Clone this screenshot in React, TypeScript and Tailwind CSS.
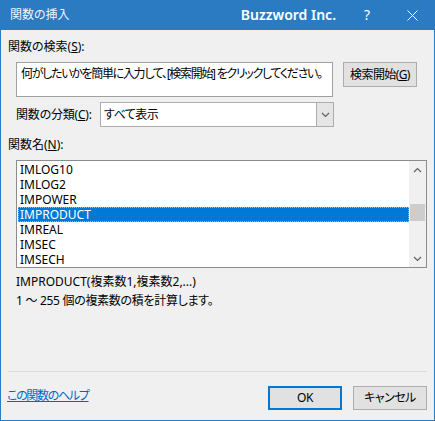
import React from "react";

const FONT = "[font-family:'Noto_Sans','Noto_Sans_CJK_JP',sans-serif] [font-feature-settings:'palt']";

const functionNames = ["IMLOG10", "IMLOG2", "IMPOWER", "IMPRODUCT", "IMREAL", "IMSEC", "IMSECH"];
const selectedName = "IMPRODUCT";

function Chevron({ up = false, className = "" }: { up?: boolean; className?: string }) {
  return (
    <svg width="9" height="6" viewBox="0 0 9 6" className={className}>
      <path
        d={up ? "M1 5 L4.5 1.5 L8 5" : "M1 1 L4.5 4.5 L8 1"}
        fill="none"
        stroke="#606060"
        strokeWidth="1.2"
      />
    </svg>
  );
}

function Button({ label, primary = false }: { label: React.ReactNode; primary?: boolean }) {
  return (
    <button
      type="button"
      className={`h-[24px] w-[74px] flex items-center justify-center bg-[#e1e1e1] text-[12px] text-black tracking-[-0.5px] ${
        primary ? "border-2 border-[#0078d7]" : "border border-[#adadad]"
      }`}
    >
      {label}
    </button>
  );
}

export default function App() {
  return (
    <div className={`${FONT} w-[435px] h-[421px] bg-[#2b7bc2] flex flex-col`}>
      {/* title bar */}
      <div className="h-[30px] flex items-center text-white">
        <span className="pl-[10px] text-[12px] text-white/95">関数の挿入</span>
        <div className="flex-1" />
        <span className="text-[14px] font-semibold leading-none">Buzzword Inc.</span>
        <span className="ml-[8px] w-[46px] text-center text-[14px] leading-none">?</span>
        <span className="w-[45px] flex justify-center">
          <svg width="11" height="11" viewBox="0 0 11 11">
            <path d="M0.5 0.5 L10.5 10.5 M10.5 0.5 L0.5 10.5" stroke="white" strokeWidth="1" />
          </svg>
        </span>
      </div>

      {/* body */}
      <div className="flex-1 mx-px mb-px bg-[#f0f0f0] flex flex-col text-[12px] text-black">
        <div className="mt-[9px] ml-[7px] h-[16px] leading-[16px]">
          関数の検索(<span className="underline">S</span>):
        </div>

        <div className="mt-[7px] ml-[15px] flex items-start gap-[10px]">
          <div className="w-[317px] h-[35px] bg-white border border-[#a0a0a0] pl-[4px] pt-[3px] leading-[16px] whitespace-nowrap overflow-hidden tracking-[-1.3px]">
            何がしたいかを簡単に入力して、[検索開始] をクリックしてください。
          </div>
          <button
            type="button"
            className="w-[74px] h-[25px] bg-[#e1e1e1] border border-[#adadad] flex items-center justify-center tracking-[-0.6px]"
          >
            検索開始(<span className="underline">G</span>)
          </button>
        </div>

        <div className="mt-[5px] ml-[15px] flex items-center h-[25px]">
          <div className="w-[84px] leading-[16px] tracking-[-0.2px]">
            関数の分類(<span className="underline">C</span>):
          </div>
          <div className="w-[234px] h-[25px] bg-white border border-[#acacac] flex">
            <div className="flex-1 pl-[3px] flex items-center tracking-[-0.5px]">すべて表示</div>
            <div className="w-[17px] bg-[#e5e5e5] border-l border-[#acacac] flex items-center justify-center">
              <Chevron />
            </div>
          </div>
        </div>

        <div className="mt-[10px] ml-[7px] h-[16px] leading-[16px]">
          関数名(<span className="underline">N</span>):
        </div>

        <div className="mt-[7px] ml-[15px] w-[411px] h-[108px] bg-white border border-[#8c8c8c] flex">
          <div className="flex-1 pl-[1px] pt-[1px] flex flex-col">
            {functionNames.map((name) => (
              <div
                key={name}
                className={`h-[15px] leading-[15px] pl-[2px] ${
                  name === selectedName
                    ? "bg-[#0078d7] text-white outline-1 outline-dotted outline-[#9ab8d8] -outline-offset-1"
                    : ""
                }`}
              >
                {name}
              </div>
            ))}
          </div>
          <div className="w-[17px] bg-[#f0f0f0] flex flex-col">
            <div className="h-[17px] flex items-center justify-center">
              <Chevron up />
            </div>
            <div className="flex-1 px-[1px]">
              <div className="mt-[26px] h-[17px] bg-[#cdcdcd]" />
            </div>
            <div className="h-[17px] flex items-center justify-center">
              <Chevron />
            </div>
          </div>
        </div>

        <div className="mt-[4px] ml-[15px] leading-[19px]">
          <div>IMPRODUCT(複素数1,複素数2,...)</div>
          <div className="tracking-[-0.3px]">1 ～ 255 個の複素数の積を計算します。</div>
        </div>

        <div className="flex-1" />

        <div className="mx-[7px] h-px bg-[#dcdcdc]" />

        <div className="mt-[14px] mb-[10px] pl-[6px] pr-[7px] flex items-center">
          <a href="#" className="text-[#0066cc] underline -mt-[4px] tracking-[-1.3px]">
            この関数のヘルプ
          </a>
          <div className="flex-1" />
          <div className="flex gap-[11px]">
            <Button label="OK" primary />
            <Button label="キャンセル" />
          </div>
        </div>
      </div>
    </div>
  );
}
